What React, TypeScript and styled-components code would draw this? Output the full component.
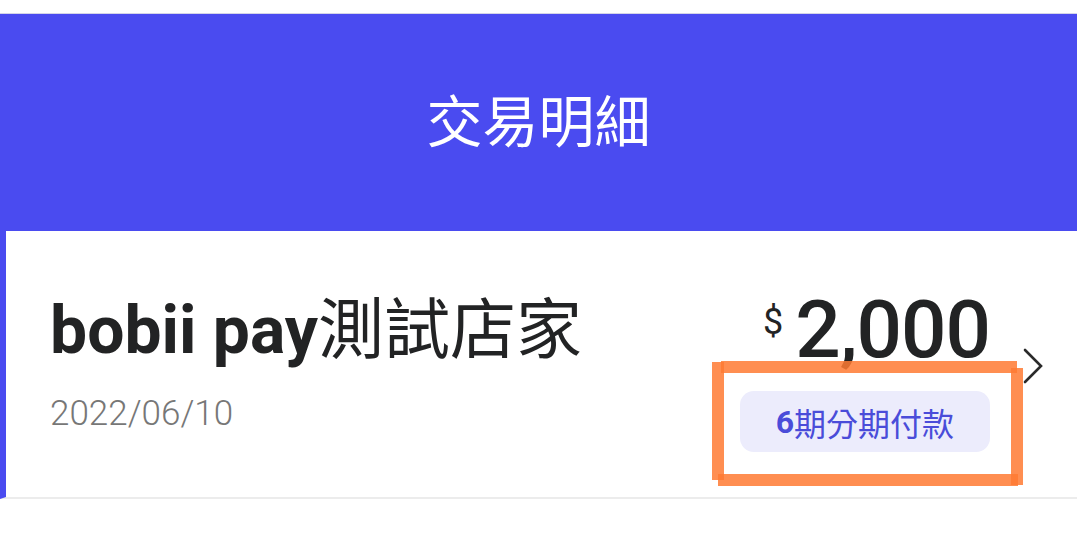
import React from "react";
import styled, { createGlobalStyle } from "styled-components";

const GlobalStyle = createGlobalStyle`
  html, body { margin: 0; padding: 0; background: #ffffff; }
  body { font-family: Roboto, "Noto Sans CJK TC", sans-serif; }
  * { box-sizing: border-box; }
`;

const Page = styled.div`
  position: relative;
  width: 1077px;
  height: 541px;
  overflow: hidden;
  background: #ffffff;
  padding-top: 13px;
`;

const Header = styled.header`
  height: 218px;
  border-top: 1px solid #d4d4e8;
  background: #4a4bf0;
  display: flex;
  align-items: center;
  justify-content: center;
`;

const Title = styled.h1`
  margin: 0;
  color: #ffffff;
  font-family: "Noto Sans CJK TC", sans-serif;
  font-weight: 400;
  font-size: 56px;
  line-height: 1;
  padding-bottom: 10px;
`;

const Card = styled.section`
  height: 268px;
  display: flex;
  align-items: stretch;
  border-left: 6px solid #4a4bf0;
  border-bottom: 2px solid #ececec;
  padding: 0 34px 0 44px;
`;

const Info = styled.div`
  flex: 1;
  display: flex;
  flex-direction: column;
  padding-top: 60px;
`;

const Merchant = styled.div`
  font-family: Roboto, "Noto Sans CJK TC", sans-serif;
  font-size: 66px;
  line-height: 1.2;
  color: #222324;
  white-space: nowrap;
`;

const Latin = styled.span`
  font-weight: 700;
`;

const CJK = styled.span`
  font-weight: 400;
`;

const DateText = styled.div`
  margin-top: 23px;
  font-family: Roboto, sans-serif;
  font-weight: 300;
  font-size: 35px;
  line-height: 1.2;
  color: #777777;
`;

const Side = styled.div`
  display: flex;
  flex-direction: column;
  align-items: flex-end;
  padding-top: 59px;
`;

const Amount = styled.div`
  display: flex;
  align-items: flex-start;
  color: #222324;
  font-family: Roboto, sans-serif;
  line-height: 1;
`;

const Currency = styled.span`
  font-size: 36px;
  font-weight: 400;
  margin-top: 14px;
  margin-right: 12px;
`;

const Value = styled.span`
  font-size: 80px;
  font-weight: 500;
  letter-spacing: -1px;
`;

const Badge = styled.div`
  margin-top: 21px;
  height: 61px;
  padding: 0 36px;
  display: flex;
  align-items: center;
  border-radius: 14px;
  background: #ececfc;
  color: #4a4cd9;
  font-family: Roboto, "Noto Sans CJK TC", sans-serif;
  font-size: 32px;
  font-weight: 400;
`;

const BadgeNum = styled.span`
  font-weight: 700;
`;

const Chevron = styled.div`
  width: 53px;
  display: flex;
  justify-content: flex-end;
  padding-top: 117px;
`;

const Annotation = styled.svg`
  position: absolute;
  left: 0;
  top: 0;
  pointer-events: none;
`;

export default function App() {
  return (
    <>
      <GlobalStyle />
      <Page>
        <Header>
          <Title>交易明細</Title>
        </Header>
        <Card>
          <Info>
            <Merchant>
              <Latin>bobii pay</Latin>
              <CJK>測試店家</CJK>
            </Merchant>
            <DateText>2022/06/10</DateText>
          </Info>
          <Side>
            <Amount>
              <Currency>$</Currency>
              <Value>2,000</Value>
            </Amount>
            <Badge>
              <BadgeNum>6</BadgeNum>期分期付款
            </Badge>
          </Side>
          <Chevron>
            <svg width="20" height="36" viewBox="0 0 20 36" fill="none">
              <path d="M2 2 L18 18 L2 34" stroke="#2a2a2a" strokeWidth="2.6" strokeLinecap="round" strokeLinejoin="miter" />
            </svg>
          </Chevron>
        </Card>
        <Annotation width="1077" height="541" viewBox="0 0 1077 541">
          <g fill="#ff7a33" fillOpacity="0.85">
            <rect x="712" y="362" width="12" height="118" />
            <rect x="721" y="361" width="296" height="12" />
            <rect x="1011" y="368" width="12" height="117" />
            <rect x="718" y="474" width="300" height="12" />
          </g>
        </Annotation>
      </Page>
    </>
  );
}
